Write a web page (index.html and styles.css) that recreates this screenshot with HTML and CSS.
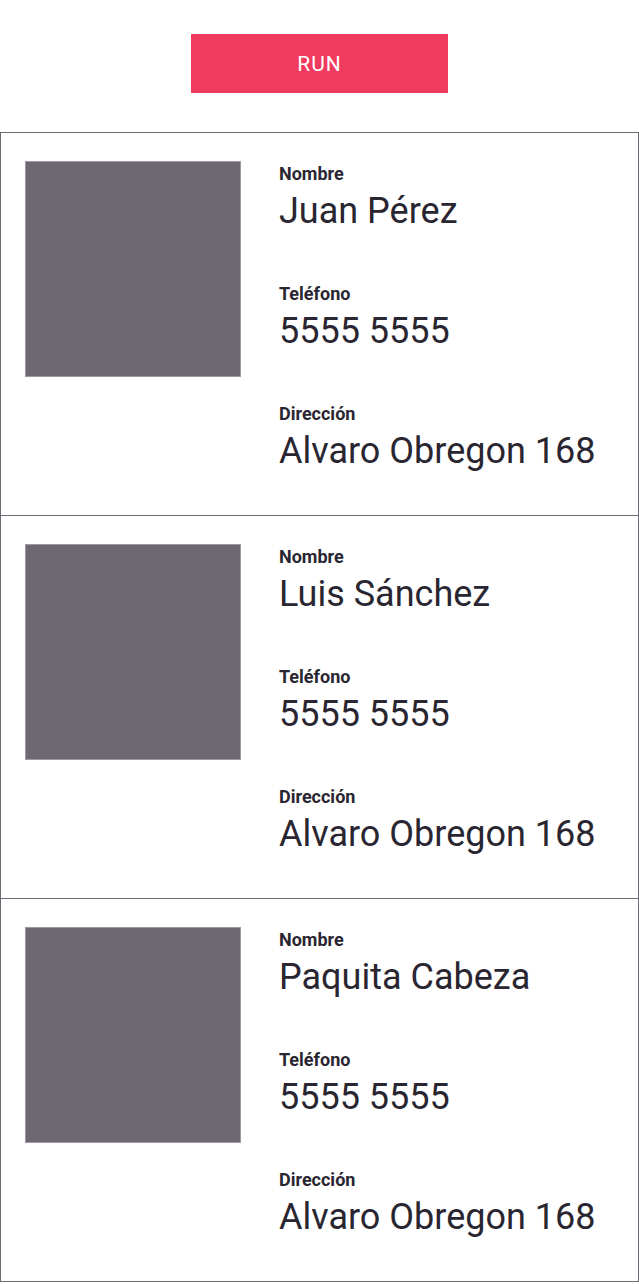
FILE: index.html
```html
<!DOCTYPE html>
<html lang="es">
<head>
<meta charset="utf-8">
<title>Contactos</title>
<link rel="stylesheet" href="styles.css">
</head>
<body>
<div class="toolbar">
  <button class="run-btn">RUN</button>
</div>
<div class="list">
  <div class="card">
    <div class="photo"></div>
    <div class="info">
      <div class="field">
        <div class="label">Nombre</div>
        <div class="value">Juan Pérez</div>
      </div>
      <div class="field">
        <div class="label">Teléfono</div>
        <div class="value">5555 5555</div>
      </div>
      <div class="field">
        <div class="label">Dirección</div>
        <div class="value">Alvaro Obregon 168</div>
      </div>
    </div>
  </div>
  <div class="card">
    <div class="photo"></div>
    <div class="info">
      <div class="field">
        <div class="label">Nombre</div>
        <div class="value">Luis Sánchez</div>
      </div>
      <div class="field">
        <div class="label">Teléfono</div>
        <div class="value">5555 5555</div>
      </div>
      <div class="field">
        <div class="label">Dirección</div>
        <div class="value">Alvaro Obregon 168</div>
      </div>
    </div>
  </div>
  <div class="card">
    <div class="photo"></div>
    <div class="info">
      <div class="field">
        <div class="label">Nombre</div>
        <div class="value">Paquita Cabeza</div>
      </div>
      <div class="field">
        <div class="label">Teléfono</div>
        <div class="value">5555 5555</div>
      </div>
      <div class="field">
        <div class="label">Dirección</div>
        <div class="value">Alvaro Obregon 168</div>
      </div>
    </div>
  </div>
</div>
</body>
</html>
```
FILE: styles.css
```css
* { box-sizing: border-box; }
html, body {
  margin: 0;
  padding: 0;
  background: #ffffff;
  font-family: Roboto, "Liberation Sans", sans-serif;
  color: #2a2631;
}
.toolbar {
  display: flex;
  justify-content: center;
  padding-top: 34px;
  padding-bottom: 39px;
}
.run-btn {
  width: 257px;
  height: 59px;
  border: none;
  margin: 0;
  padding: 0;
  background: #f03b5e;
  color: #ffffff;
  font-family: Roboto, "Liberation Sans", sans-serif;
  font-size: 21px;
  font-weight: 400;
  letter-spacing: 1px;
}
.list {
  display: flex;
  flex-direction: column;
  border-bottom: 1px solid #6e6873;
}
.card {
  display: flex;
  align-items: flex-start;
  height: 383px;
  padding: 28px 0 0 24px;
  border-top: 1px solid #6e6873;
  border-left: 1px solid #6e6873;
  border-right: 1px solid #6e6873;
}
.photo {
  width: 216px;
  height: 216px;
  flex: none;
  background: #6e6873;
  border: 1px solid #9d99a2;
}
.info {
  display: flex;
  flex-direction: column;
  gap: 52px;
  margin-left: 38px;
  margin-top: 3px;
}
.field {
  display: flex;
  flex-direction: column;
  gap: 6px;
}
.label {
  font-size: 18px;
  line-height: 20px;
  font-weight: 700;
}
.value {
  font-size: 36px;
  line-height: 42px;
  font-weight: 400;
}
```
